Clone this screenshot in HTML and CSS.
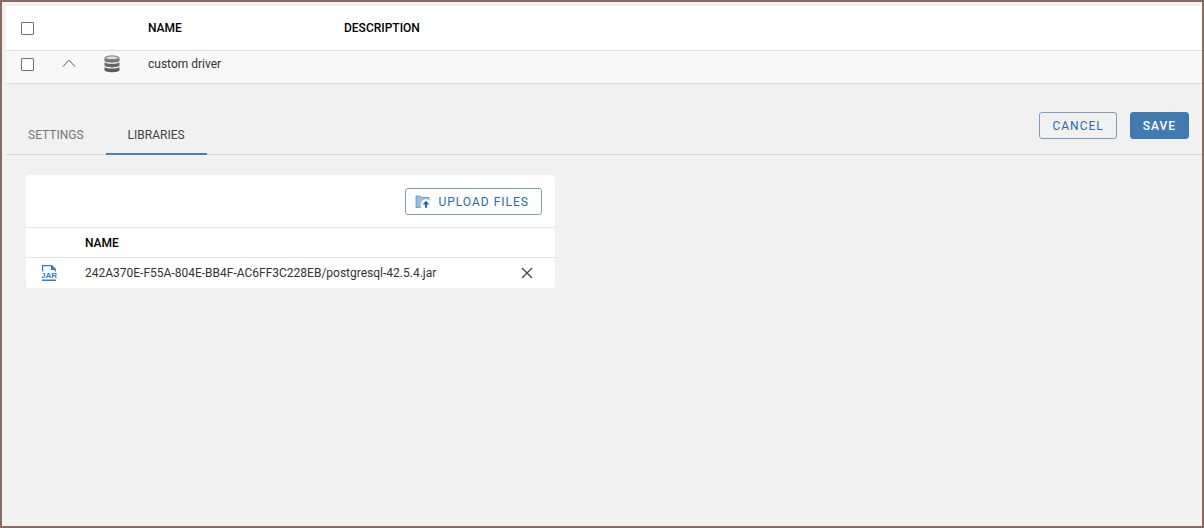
FILE: index.html
```html
<!DOCTYPE html>
<html lang="en">
<head>
<meta charset="utf-8">
<title>Drivers</title>
<link rel="stylesheet" href="styles.css">
</head>
<body>
<main class="page">
  <table class="drivers">
    <colgroup><col class="col-check"><col class="col-expand"><col class="col-icon"><col class="col-name"><col></colgroup>
    <thead>
      <tr>
        <th><input class="check" type="checkbox" aria-label="Select all drivers"></th>
        <th></th><th></th>
        <th scope="col">NAME</th>
        <th scope="col">DESCRIPTION</th>
      </tr>
    </thead>
    <tbody>
      <tr>
        <td><input class="check" type="checkbox" aria-label="Select custom driver"></td>
        <td><button class="icon-button" type="button" aria-label="Collapse custom driver"><svg width="14" height="14" viewBox="0 0 14 14" fill="none" stroke="#555" stroke-width="1"><path d="M1 9.500 7 3.200l6 6.300"/></svg></button></td>
        <td><svg class="icon" width="16" height="18" viewBox="0 0 16 18">
          <path fill="#5c5c5c" d="M.5 12c2 2 13 2 15 0v3c0 3-15 3-15 0z"/>
          <path fill="#686868" d="M.5 7.300c2 2 13 2 15 0v3c0 2.800-15 2.800-15 0z"/>
          <path fill="#777" d="M.5 2.800v3c0 2.500 15 2.500 15 0v-3z"/>
          <ellipse cx="8" cy="2.800" rx="7" ry="1.900" fill="#ddd" stroke="#777"/>
        </svg></td>
        <td>custom driver</td>
        <td></td>
      </tr>
    </tbody>
  </table>

  <div class="tab-bar">
    <div class="tabs" role="tablist">
      <button class="tab" type="button" role="tab" aria-selected="false">SETTINGS</button>
      <button class="tab tab-active" type="button" role="tab" aria-selected="true">LIBRARIES</button>
    </div>
    <div class="actions">
      <button class="button" type="button">CANCEL</button>
      <button class="button button-primary" type="button">SAVE</button>
    </div>
  </div>

  <section class="panel">
    <div class="toolbar">
      <button class="button button-upload" type="button"><svg width="16" height="14" viewBox="0 0 16 14">
        <path fill="#93c0e5" stroke="#5d94c7" stroke-width=".8" d="M1 12.500V1h4.500l1.200 1.500H14v10z"/>
        <path fill="#fff" d="M5.800 14V9a5 5 0 0 1 5-4.700A5 5 0 0 1 16 8v6z"/>
        <path fill="#2168ae" d="m11 5.800 3.400 3.700H12v3.300h-2V9.500H7.600z"/>
      </svg>UPLOAD FILES</button>
    </div>
    <table class="files">
      <colgroup><col class="col-file-icon"><col><col class="col-remove"></colgroup>
      <thead><tr><th></th><th scope="col">NAME</th><th></th></tr></thead>
      <tbody>
        <tr>
          <td><svg class="icon" width="16" height="18" viewBox="0 0 16 18" role="img" aria-label="JAR file">
            <path fill="none" stroke="#2f7fc6" stroke-width="1.200" d="M1.600 7.500V1.600h9.200l3.600 3.600v2.300"/>
            <path fill="#2f7fc6" d="M10 1v5h5zM1 15.600h14V17H1z"/>
            <text class="jar-label" x="8" y="14" text-anchor="middle">JAR</text>
          </svg></td>
          <td>242A370E-F55A-804E-BB4F-AC6FF3C228EB/postgresql-42.5.4.jar</td>
          <td><button class="icon-button" type="button" aria-label="Remove file"><svg width="12" height="12" viewBox="0 0 12 12" stroke="#444" stroke-width="1.300"><path d="m1 1 10 10M11 1 1 11"/></svg></button></td>
        </tr>
      </tbody>
    </table>
  </section>
</main>
</body>
</html>
```
FILE: styles.css
```css
* {
  box-sizing: border-box;
}

body {
  margin: 0;
  font: 12px/16px Roboto, sans-serif;
  color: #333;
}

.page {
  min-height: 100vh;
  padding: 4px 0 0 4px;
  border: 2px solid #866c62;
  background: #f1f1f1;
}

button {
  margin: 0;
  font: inherit;
  cursor: pointer;
}

table {
  width: 100%;
  border-collapse: separate;
  border-spacing: 0;
  table-layout: fixed;
}

th,
td {
  padding: 0;
  text-align: left;
  vertical-align: middle;
}

th {
  font-weight: 500;
  color: #000;
}

.drivers th {
  height: 45px;
  background: #fff;
  border-bottom: 1px solid #dedede;
}

.drivers td {
  height: 33px;
  padding-bottom: 6px;
  background: #f8f8f8;
  border-bottom: 1px solid #dedede;
}

.drivers th:first-child,
.drivers td:first-child {
  padding-left: 15px;
}

.col-check {
  width: 56px;
}

.col-expand {
  width: 42px;
}

.col-icon {
  width: 44px;
}

.col-name {
  width: 196px;
}

.check {
  display: block;
  width: 13px;
  height: 13px;
  margin: 0;
  appearance: none;
  border: 1px solid #707070;
  border-radius: 1px;
  background: #fff;
}

.icon,
.icon-button svg {
  display: block;
}

.icon-button {
  display: block;
  padding: 0;
  border: 0;
  background: none;
}

.tab-bar {
  display: flex;
  justify-content: space-between;
  height: 71px;
  padding-right: 13px;
  border-bottom: 1px solid #d9d9d9;
}

.tabs {
  display: flex;
  align-items: flex-end;
  margin-bottom: -1px;
}

.tab {
  height: 38px;
  padding: 0 22px;
  border: 0;
  border-bottom: 2px solid transparent;
  background: none;
  color: #777;
}

.tab-active {
  border-bottom-color: #4a7fb8;
  color: #444;
}

.actions {
  display: flex;
  align-items: flex-start;
  gap: 13px;
  padding-top: 28px;
}

.button {
  display: flex;
  align-items: center;
  gap: 7px;
  height: 27px;
  padding: 0 12px;
  border: 1px solid #7f9dc1;
  border-radius: 3px;
  background: transparent;
  color: #286ba9;
  letter-spacing: 1px;
}

.button-primary {
  border-color: #4179b1;
  background: #4179b1;
  color: #fff;
  font-weight: 500;
}

.button-upload {
  padding: 0 12px 0 9px;
}

.panel {
  max-width: 529px;
  margin: 20px;
  overflow: hidden;
  border-radius: 3px;
  background: #fff;
}

.toolbar {
  display: flex;
  justify-content: flex-end;
  padding: 13px 13px 12px;
}

.files th {
  height: 31px;
  border-top: 1px solid #e5e5e5;
  border-bottom: 1px solid #e5e5e5;
}

.files td {
  height: 30px;
}

.files th:first-child,
.files td:first-child {
  padding-left: 15px;
}

.col-file-icon {
  width: 59px;
}

.col-remove {
  width: 34px;
}

.jar-label {
  fill: #2f7fc6;
  font: 700 8px "Liberation Sans", sans-serif;
}
```
